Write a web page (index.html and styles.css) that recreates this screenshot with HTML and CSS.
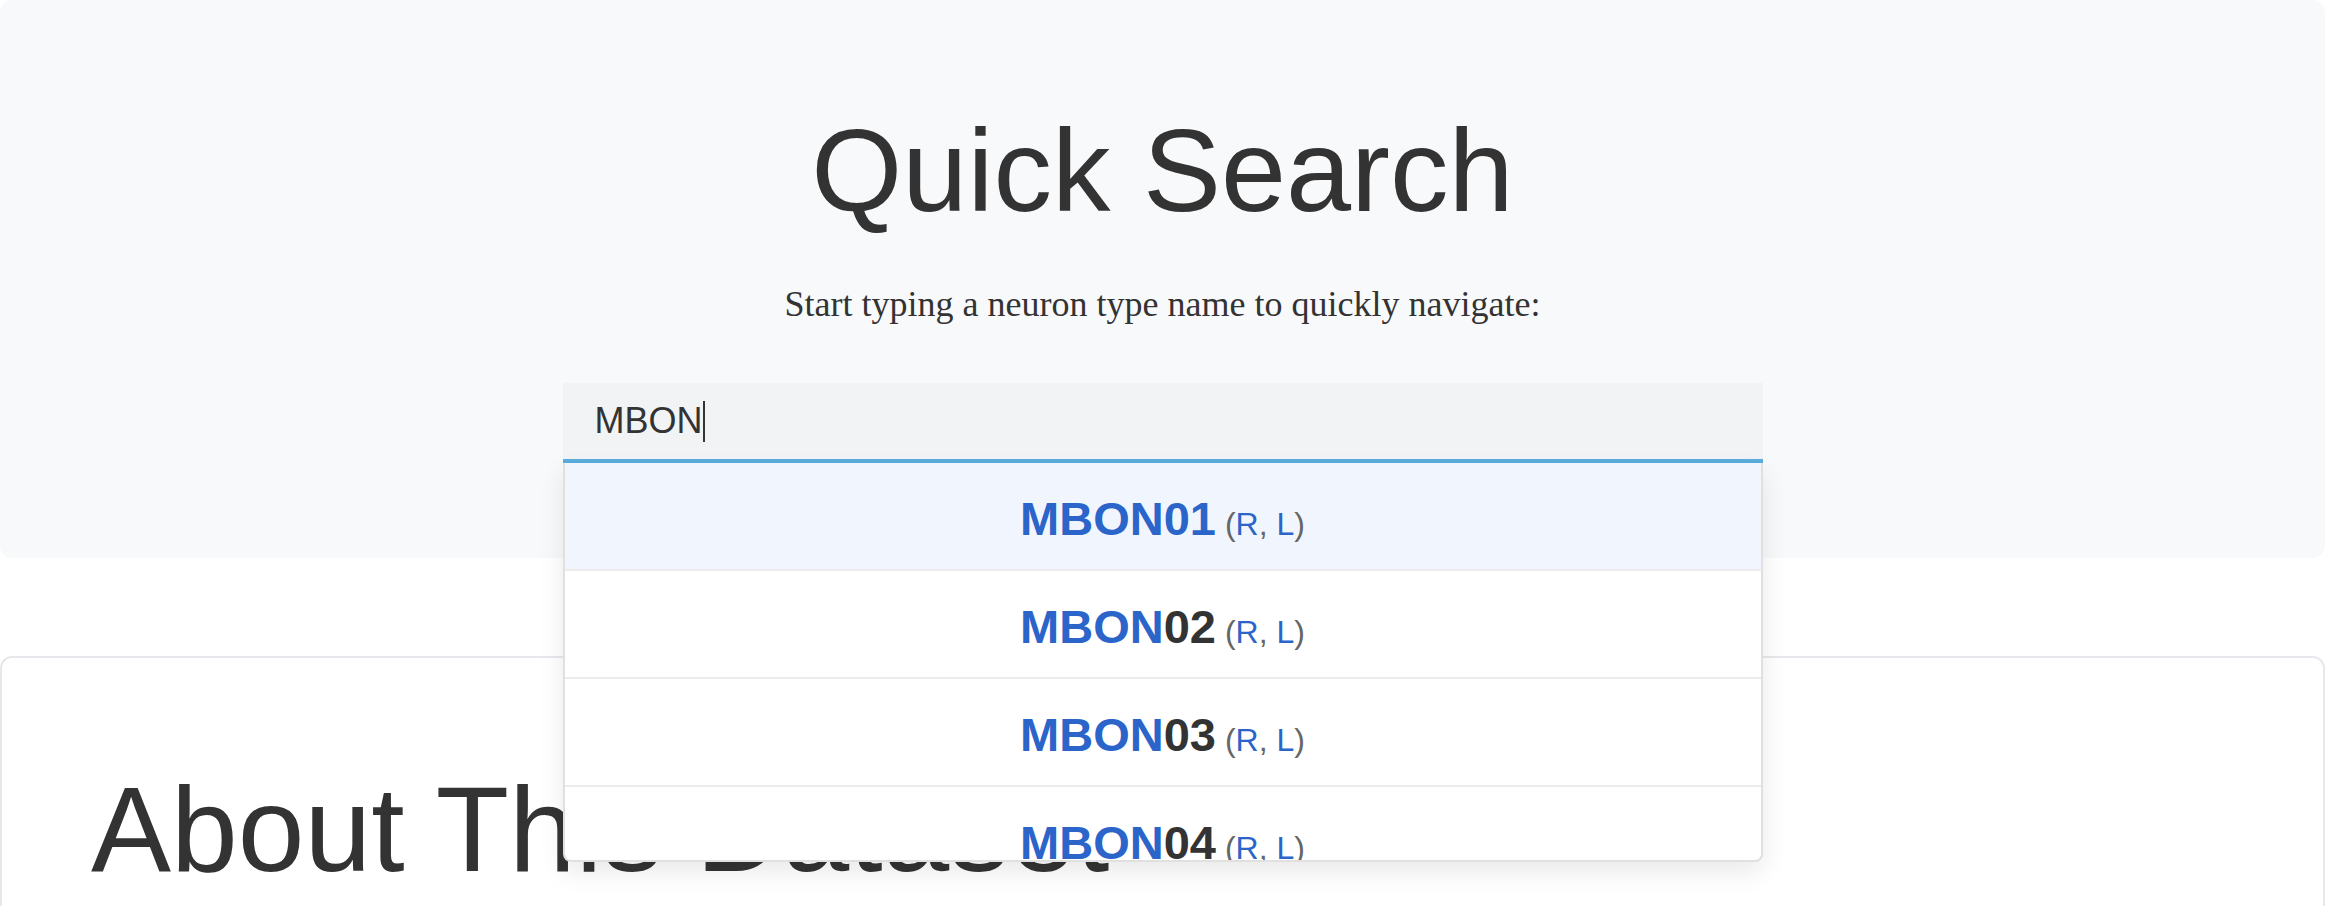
FILE: index.html
```html
<!DOCTYPE html>
<html lang="en">
<head>
<meta charset="utf-8">
<title>Quick Search</title>
<link rel="stylesheet" href="styles.css">
</head>
<body>
<div class="page">
  <section class="hero">
    <h1 class="hero-title">Quick Search</h1>
    <p class="hero-lead">Start typing a neuron type name to quickly navigate:</p>
    <div class="search">
      <div class="search-input" role="searchbox"><span class="search-text">MBON</span><span class="caret"></span></div>
      <ul class="suggestions">
        <li class="suggestion active"><span class="label"><span class="name"><span class="match">MBON</span>01</span><span class="sides"> (<span class="side">R</span>, <span class="side">L</span>)</span></span></li>
        <li class="suggestion"><span class="label"><span class="name"><span class="match">MBON</span>02</span><span class="sides"> (<span class="side">R</span>, <span class="side">L</span>)</span></span></li>
        <li class="suggestion"><span class="label"><span class="name"><span class="match">MBON</span>03</span><span class="sides"> (<span class="side">R</span>, <span class="side">L</span>)</span></span></li>
        <li class="suggestion"><span class="label"><span class="name"><span class="match">MBON</span>04</span><span class="sides"> (<span class="side">R</span>, <span class="side">L</span>)</span></span></li>
        <li class="suggestion"><span class="label"><span class="name"><span class="match">MBON</span>05</span><span class="sides"> (<span class="side">R</span>, <span class="side">L</span>)</span></span></li>
      </ul>
    </div>
  </section>
  <section class="card">
    <h2 class="card-title">About This Dataset</h2>
  </section>
</div>
</body>
</html>
```

FILE: styles.css
```css
* {
  box-sizing: border-box;
}

html,
body {
  margin: 0;
  padding: 0;
  background: #ffffff;
}

body {
  font-family: "Liberation Sans", Arial, Helvetica, sans-serif;
  color: #333333;
}

.page {
  width: 2325px;
}

/* ---------- hero ---------- */
.hero {
  background: #f8f9fa;
  border-radius: 12px;
  padding: 99px 0 95px;
  text-align: center;
}

.hero-title {
  margin: 0;
  font-size: 117px;
  font-weight: 400;
  line-height: 144px;
  color: #333333;
}

.hero-lead {
  margin: 34px 0 0;
  font-family: "Liberation Serif", "Times New Roman", serif;
  font-size: 36px;
  line-height: 54px;
  color: #333333;
}

/* ---------- search ---------- */
.search {
  position: relative;
  width: 1200px;
  margin: 52px auto 0;
  text-align: left;
}

.search-input {
  height: 80px;
  background: #f2f3f5;
  border-bottom: 4px solid #5aaedc;
  padding: 0 32px;
  display: flex;
  align-items: center;
  font-size: 36px;
  color: #333333;
}

.caret {
  display: inline-block;
  width: 2px;
  height: 41px;
  background: #333333;
}

.suggestions {
  position: absolute;
  top: 100%;
  left: 0;
  right: 0;
  margin: 0;
  padding: 0;
  list-style: none;
  background: #ffffff;
  border: 2px solid #e0e0e0;
  border-top: 0;
  border-radius: 0 0 8px 8px;
  max-height: 399px;
  overflow: hidden;
  box-shadow: 0 10px 26px rgba(0, 0, 0, 0.09);
  z-index: 10;
}

.suggestion {
  height: 108px;
  padding-top: 4px;
  border-bottom: 2px solid #ececec;
  display: flex;
  justify-content: center;
  align-items: center;
}

.suggestion.active {
  background: #f1f6fe;
}

.label {
  white-space: nowrap;
}

.name {
  font-weight: 700;
  font-size: 47px;
  color: #333333;
}

.match,
.active .name {
  color: #2b65c9;
}

.sides {
  font-size: 32px;
  color: #666666;
}

.side {
  color: #2b65c9;
}

/* ---------- card ---------- */
.card {
  margin-top: 98px;
  border: 2px solid #e7e8eb;
  border-radius: 12px;
  padding: 99px 89px 200px;
  background: #ffffff;
}

.card-title {
  margin: 0;
  font-size: 120px;
  font-weight: 400;
  line-height: 144px;
  color: #333333;
}
```
